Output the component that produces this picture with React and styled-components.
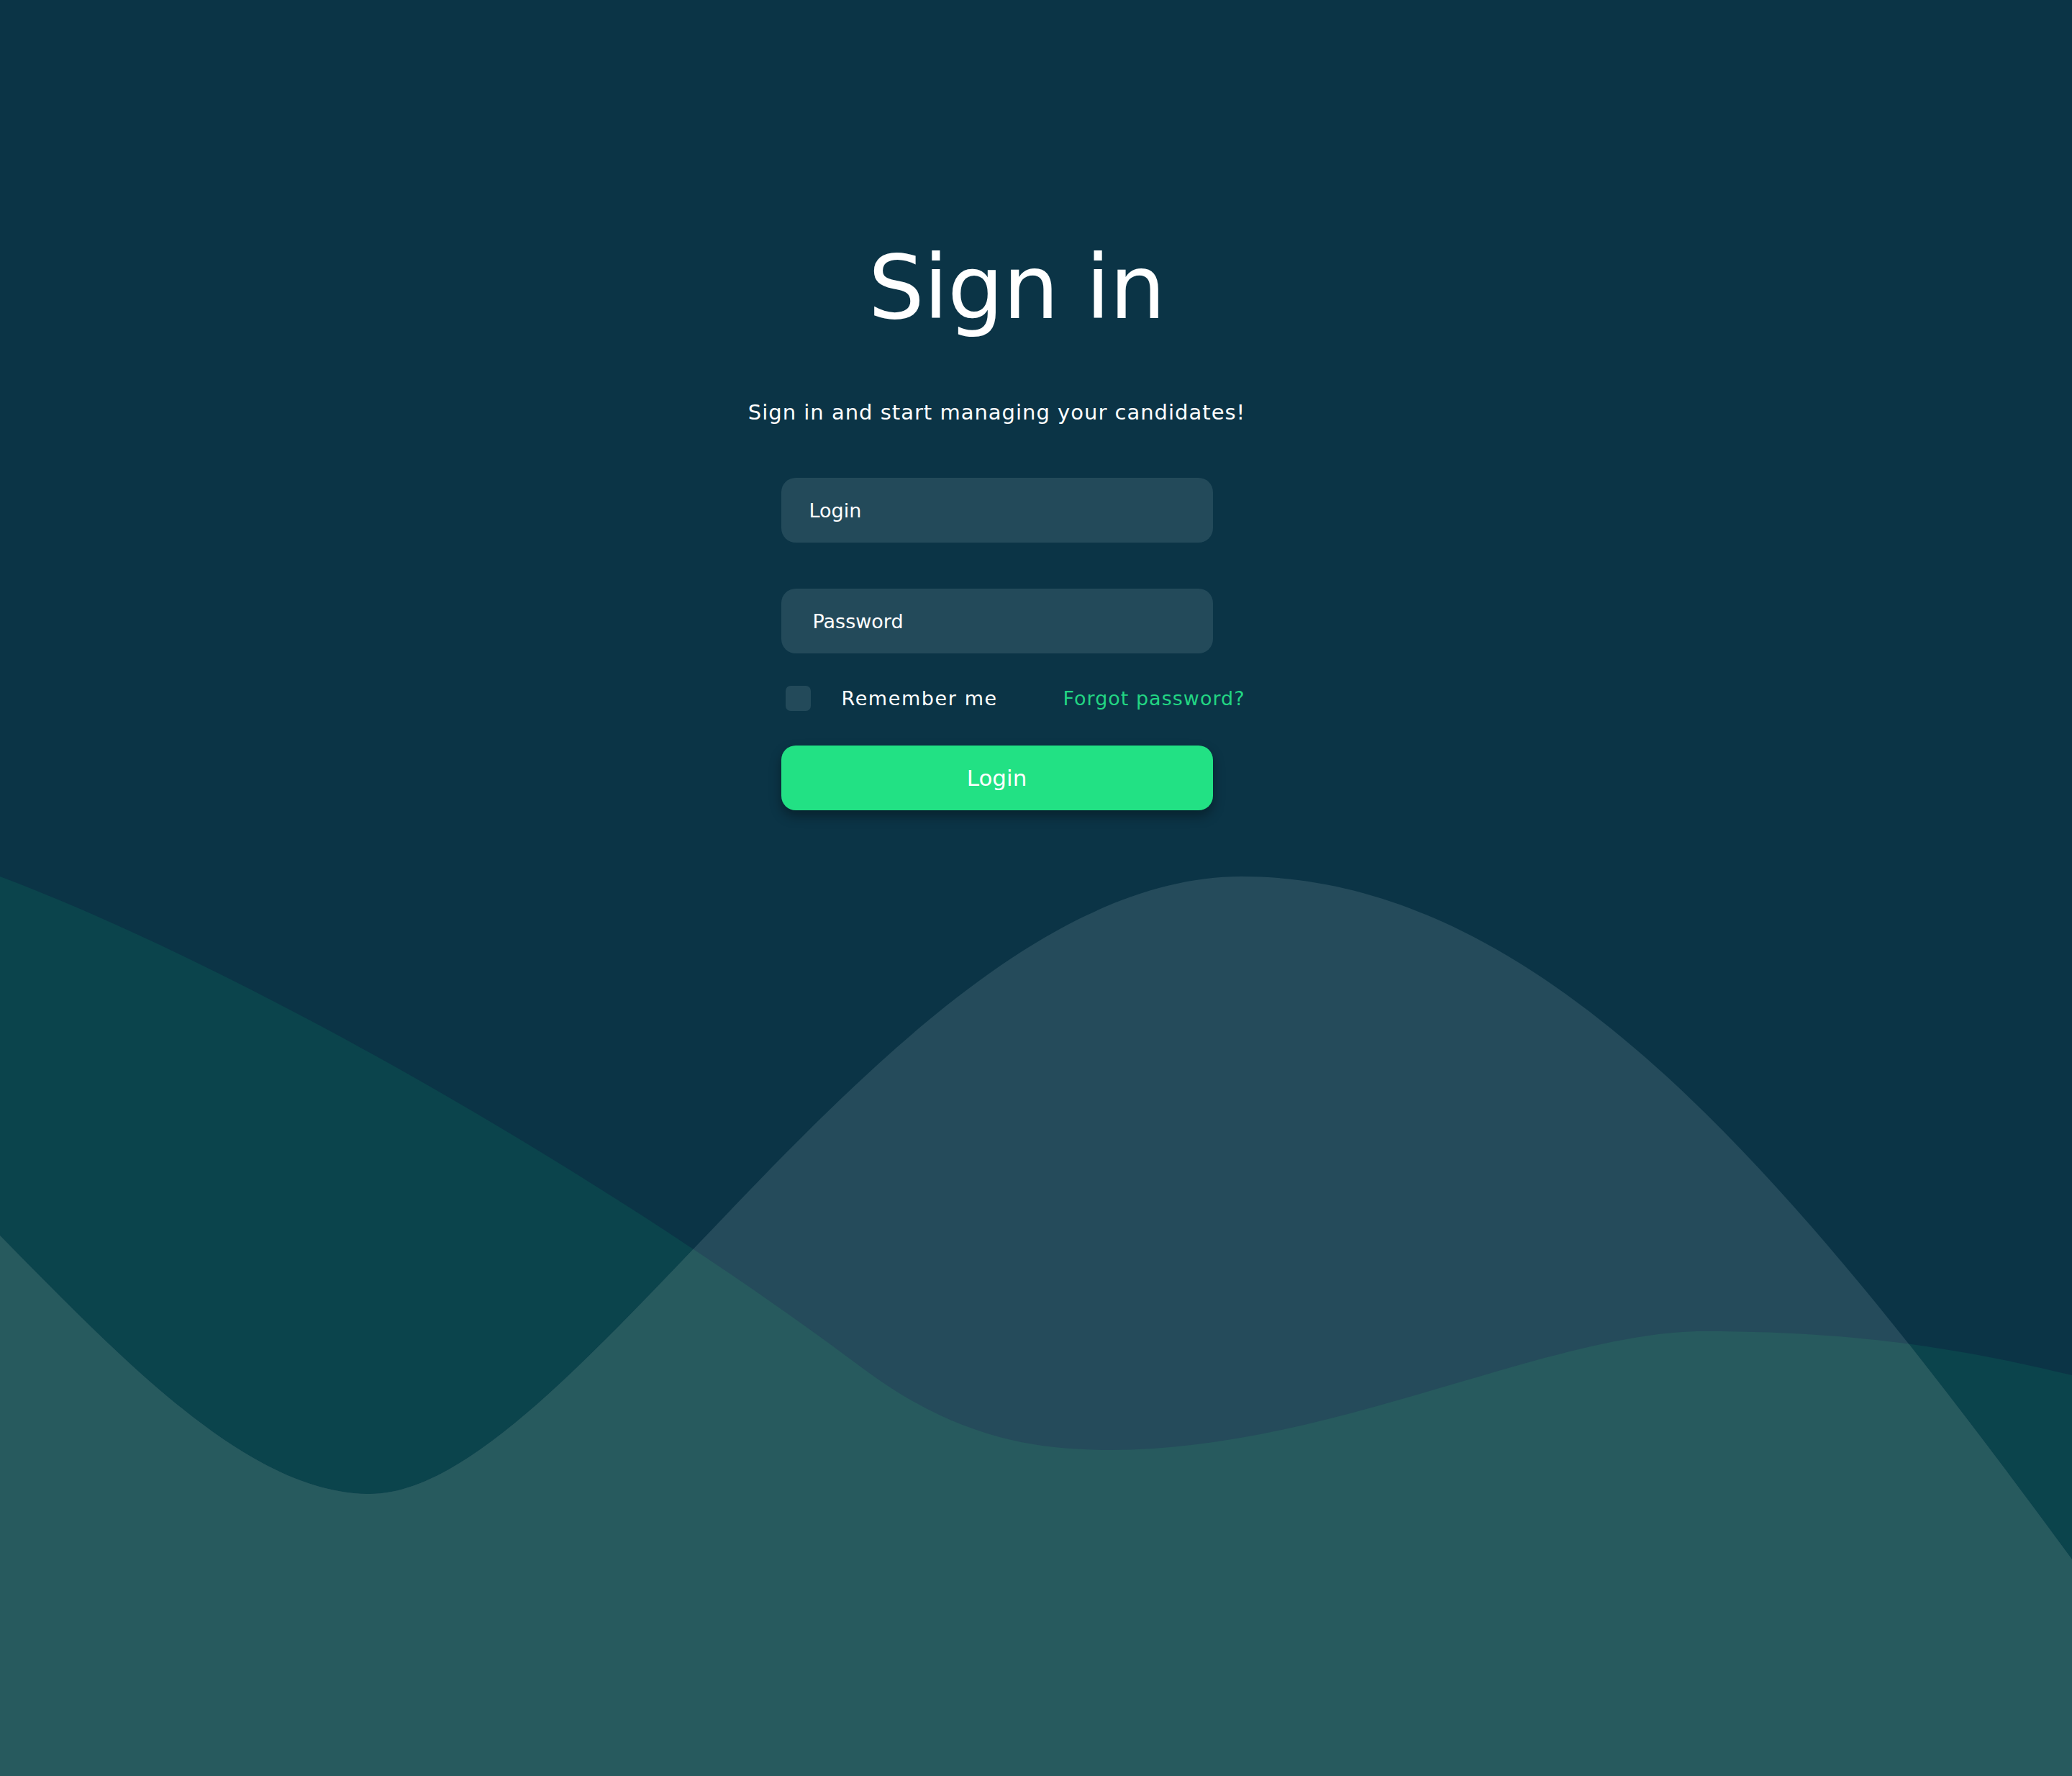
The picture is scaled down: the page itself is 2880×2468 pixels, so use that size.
import React from "react";
import styled, { createGlobalStyle } from "styled-components";

const GlobalStyle = createGlobalStyle`
  html, body { margin: 0; padding: 0; background: #0b3446; }
  * { box-sizing: border-box; }
`;

const Page = styled.div`
  position: relative;
  width: 2880px;
  height: 2468px;
  overflow: hidden;
  background: #0b3446;
  font-family: "DejaVu Sans", "Lato", sans-serif;
  color: #ffffff;
`;

const Waves = styled.svg`
  position: absolute;
  inset: 0;
  width: 2880px;
  height: 2468px;
  z-index: 0;
`;

const Main = styled.main`
  position: relative;
  z-index: 1;
  display: flex;
  flex-direction: column;
  align-items: center;
  padding: 338px 109px 0 0;
`;

const Title = styled.h1`
  margin: 0;
  padding-left: 55px;
  font-size: 123px;
  line-height: 123px;
  font-weight: 400;
  letter-spacing: -1px;
`;

const Subtitle = styled.p`
  margin: 98px 0 0;
  font-size: 29px;
  line-height: 29px;
  font-weight: 400;
  letter-spacing: 1px;
`;

const Form = styled.form`
  width: 600px;
  margin-top: 76px;
  display: flex;
  flex-direction: column;
`;

const Field = styled.div`
  height: 90px;
  border-radius: 20px;
  background: #234a5a;
  display: flex;
  align-items: center;
  padding-left: ${(p) => p.$indent}px;
  margin-top: ${(p) => p.$top}px;
  font-size: 27px;
  color: #ffffff;
`;

const OptionsRow = styled.div`
  display: flex;
  align-items: center;
  margin: 45px -45px 0 6px;
  height: 35px;
  font-size: 27px;
`;

const Checkbox = styled.span`
  width: 35px;
  height: 35px;
  border-radius: 7px;
  background: #234a5a;
  flex: none;
`;

const RememberLabel = styled.span`
  margin-left: 43px;
  color: #ffffff;
  letter-spacing: 1.6px;
`;

const ForgotLink = styled.a`
  margin-left: auto;
  color: #22d583;
  text-decoration: none;
  letter-spacing: 1px;
`;

const SubmitButton = styled.button`
  margin-top: 48px;
  height: 90px;
  width: 100%;
  border: none;
  border-radius: 20px;
  background: #22e184;
  color: #ffffff;
  font-family: "DejaVu Sans", "Lato", sans-serif;
  font-size: 31px;
  box-shadow: 0 8px 16px rgba(0, 0, 0, 0.35);
  cursor: pointer;
`;

const shape1 =
  "M0,1218 C350,1350 850,1640 1200,1902 C1330,1999 1440,2015 1543,2015 C1850,2015 2150,1850 2369,1850 C2600,1850 2750,1880 2880,1911 L2880,2468 L0,2468 Z";
const shape2 =
  "M0,1717 C180,1900 350,2076 514,2076 C800,2076 1250,1218 1726,1218 C2150,1218 2500,1650 2880,2167 L2880,2468 L0,2468 Z";

export default function App() {
  return (
    <>
      <GlobalStyle />
      <Page>
        <Waves viewBox="0 0 2880 2468" preserveAspectRatio="none">
          <defs>
            <clipPath id="shape2clip">
              <path d={shape2} />
            </clipPath>
          </defs>
          <path d={shape1} fill="#0b444c" />
          <path d={shape2} fill="#254b5b" />
          <path d={shape1} fill="#275a5e" clipPath="url(#shape2clip)" />
        </Waves>
        <Main>
          <Title>Sign in</Title>
          <Subtitle>Sign in and start managing your candidates!</Subtitle>
          <Form onSubmit={(e) => e.preventDefault()}>
            <Field $indent={39} $top={0}>Login</Field>
            <Field $indent={44} $top={64}>Password</Field>
            <OptionsRow>
              <Checkbox />
              <RememberLabel>Remember me</RememberLabel>
              <ForgotLink href="#">Forgot password?</ForgotLink>
            </OptionsRow>
            <SubmitButton type="submit">Login</SubmitButton>
          </Form>
        </Main>
      </Page>
    </>
  );
}
